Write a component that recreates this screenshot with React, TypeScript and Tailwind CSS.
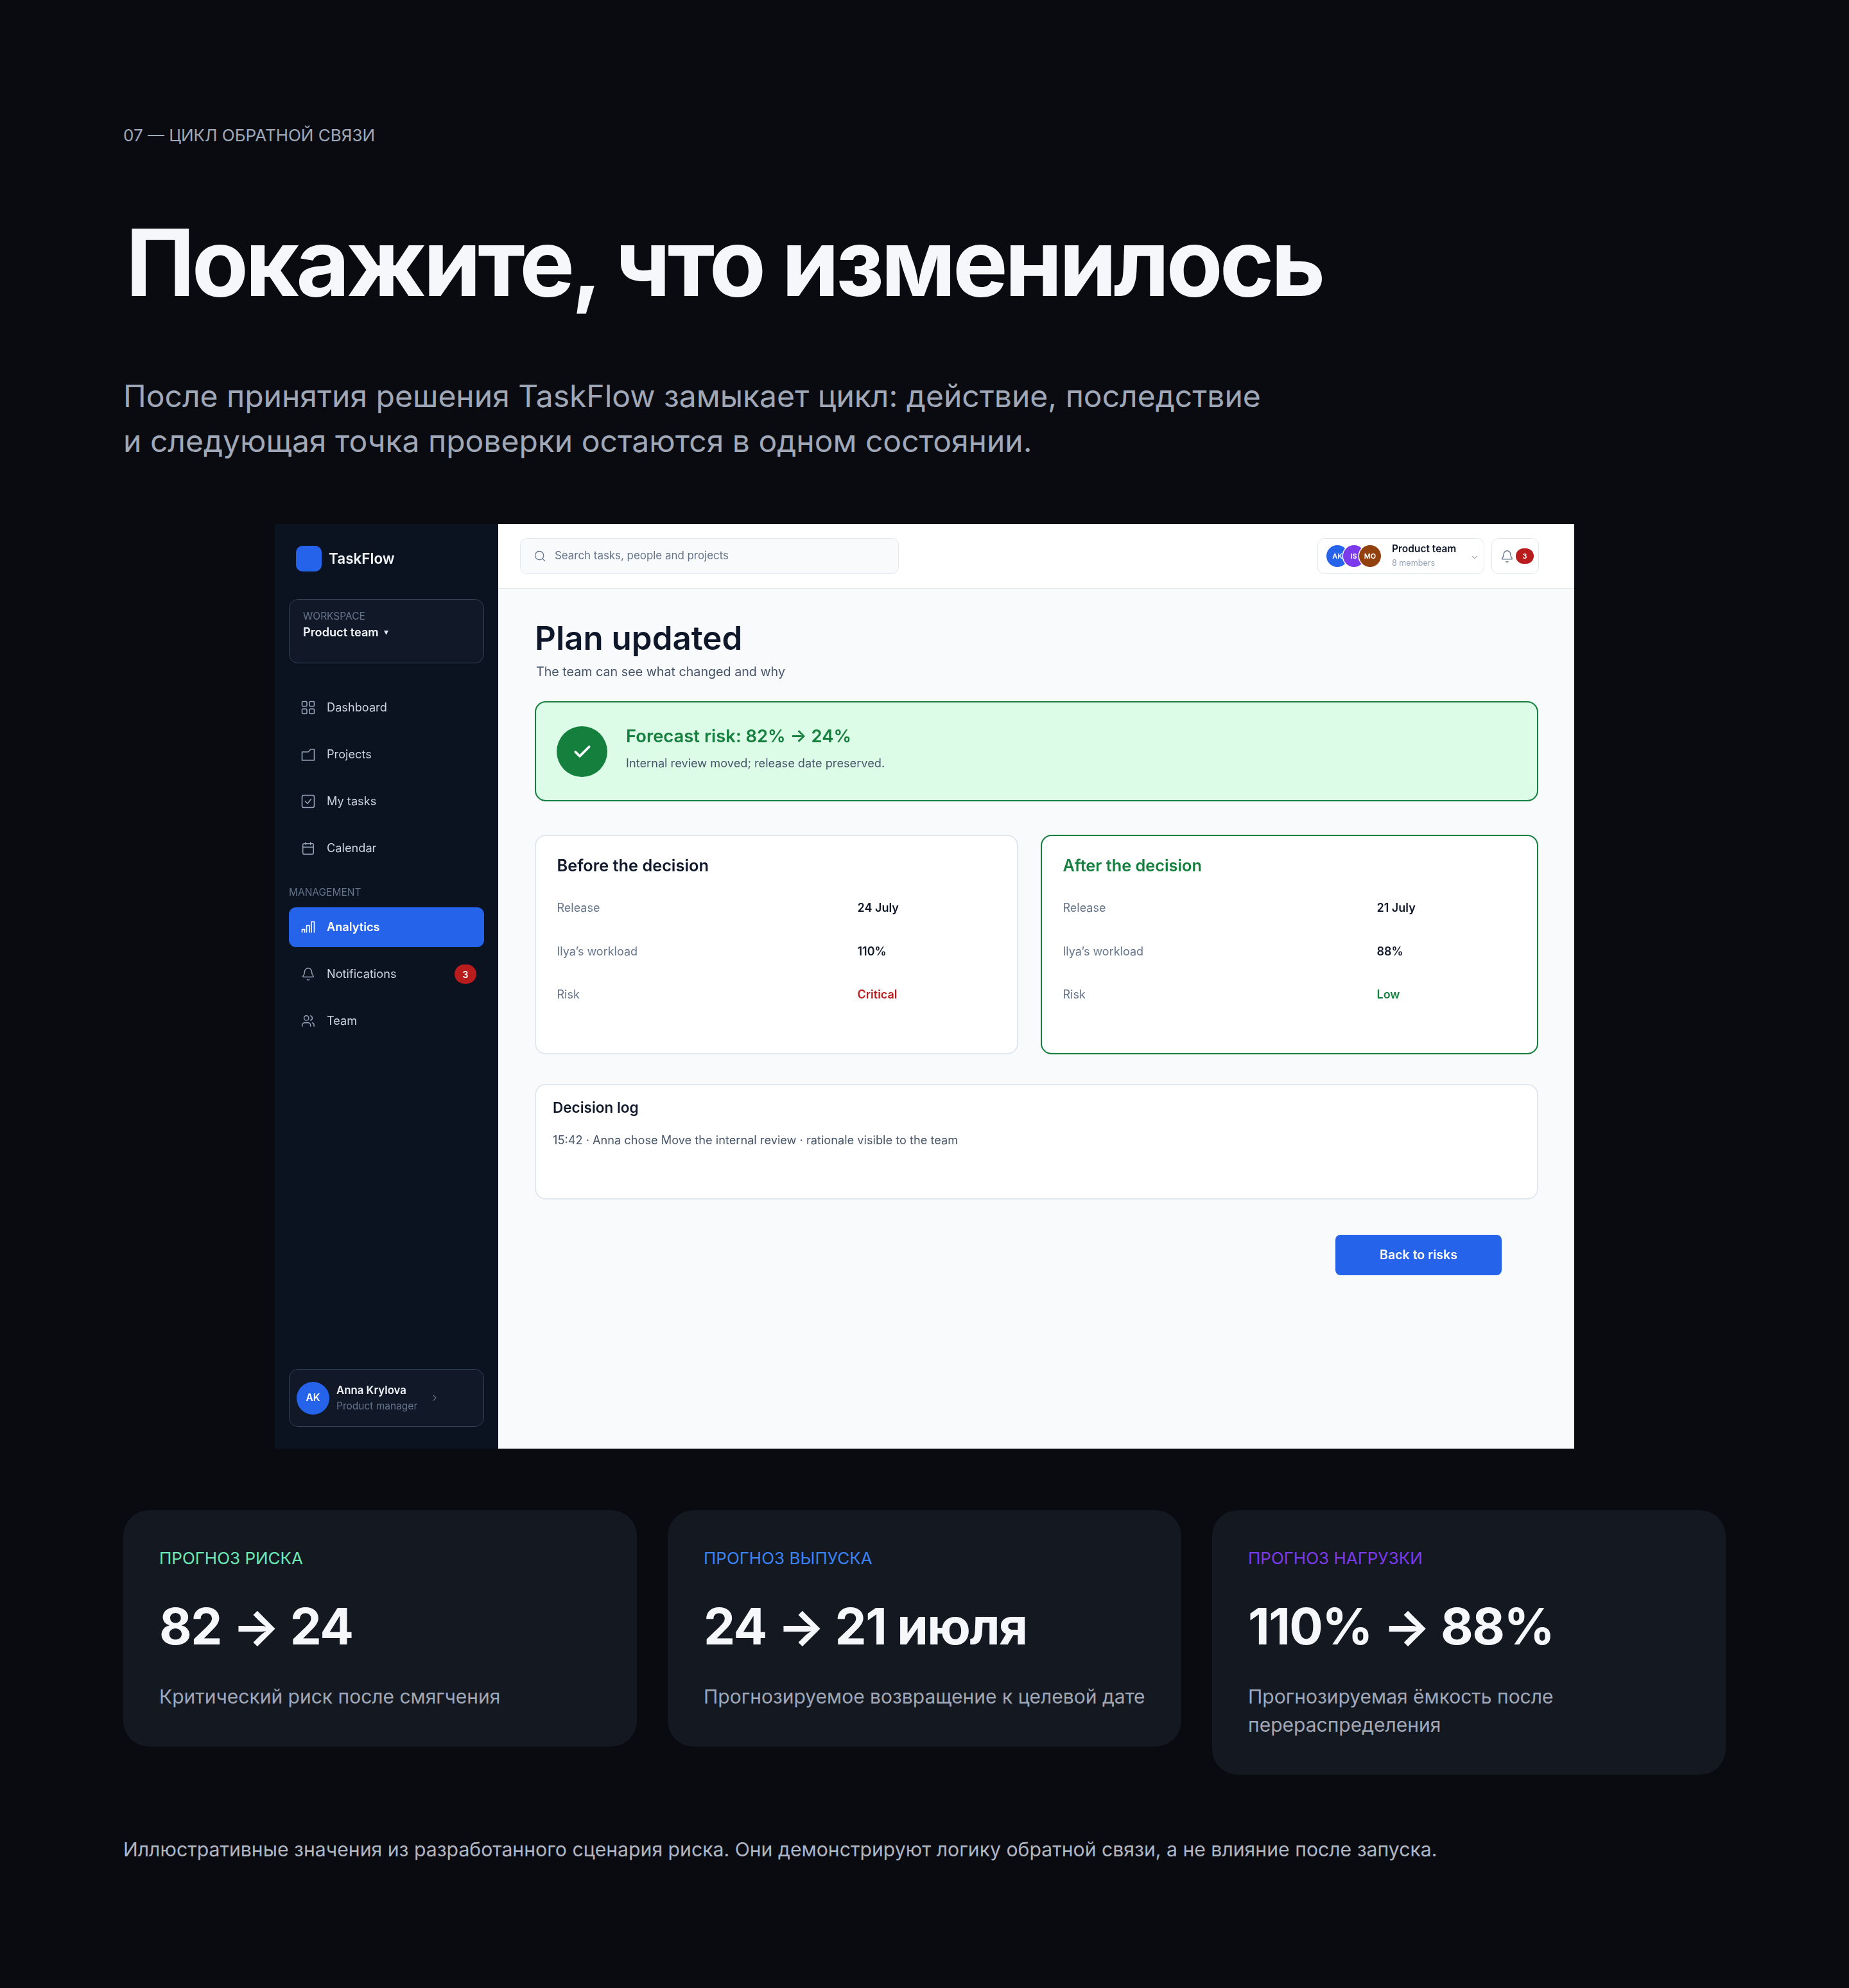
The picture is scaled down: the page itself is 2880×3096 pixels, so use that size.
import React from 'react';
import { Bell, Calendar, Check, ChevronDown, ChevronRight, Search, Users } from 'lucide-react';

const fontClass = "font-['Inter','Noto_Sans',sans-serif]";

function GridIcon(): React.ReactElement {
  return (
    <svg width="22" height="22" viewBox="0 0 22 22" fill="none" stroke="currentColor" strokeWidth="1.6">
      <rect x="1.5" y="1.5" width="7.5" height="7.5" rx="1.6" />
      <rect x="13" y="1.5" width="7.5" height="7.5" rx="1.6" />
      <rect x="1.5" y="13" width="7.5" height="7.5" rx="1.6" />
      <rect x="13" y="13" width="7.5" height="7.5" rx="1.6" />
    </svg>
  );
}

function FolderIcon(): React.ReactElement {
  return (
    <svg width="22" height="22" viewBox="0 0 22 22" fill="none" stroke="currentColor" strokeWidth="1.6" strokeLinejoin="round">
      <path d="M1.5 7 H11 L15 3 H20.5 V20 H1.5 Z" />
    </svg>
  );
}

function TaskIcon(): React.ReactElement {
  return (
    <svg width="22" height="22" viewBox="0 0 22 22" fill="none" stroke="currentColor" strokeWidth="1.6" strokeLinecap="round" strokeLinejoin="round">
      <rect x="1.5" y="1.5" width="19" height="19" rx="2.5" />
      <path d="M6.5 11 L10 14.5 L15.5 7.5" />
    </svg>
  );
}

function BarsIcon(): React.ReactElement {
  return (
    <svg width="22" height="22" viewBox="0 0 22 22" fill="none" stroke="currentColor" strokeWidth="1.6" strokeLinejoin="round">
      <path d="M1.5 19.5 V14.5 H5.5 V19.5" />
      <path d="M8.5 19.5 V8.5 H13 V19.5" />
      <path d="M16 19.5 V2.5 H20.5 V19.5" />
    </svg>
  );
}

function NavItem({
  icon,
  label,
  active,
  badge,
}: {
  icon: React.ReactNode;
  label: string;
  active?: boolean;
  badge?: string;
}): React.ReactElement {
  return (
    <div
      className={
        active
          ? 'flex h-[62px] items-center rounded-[11px] bg-[#2563eb] pl-[19px] pr-[12px] text-white'
          : 'flex h-[62px] items-center rounded-[11px] pl-[19px] pr-[12px] text-[#cbd5e1]'
      }
    >
      <span className={active ? 'flex w-[40px] text-white' : 'flex w-[40px] text-[#94a3b8]'}>{icon}</span>
      <span className={active ? 'flex-1 text-[18.2px] font-semibold' : 'flex-1 text-[18.2px]'}>{label}</span>
      {badge && (
        <span className="flex h-[30px] w-[34px] items-center justify-center rounded-full bg-[#b91c1c] text-[14px] font-semibold text-white">
          {badge}
        </span>
      )}
    </div>
  );
}

function Sidebar(): React.ReactElement {
  return (
    <aside className="flex w-[348px] shrink-0 flex-col bg-[#0b1220] px-[22px] pb-[34px] pt-[34px]">
      <div className="flex h-[40px] items-center pl-[11px]">
        <div className="h-[40px] w-[40px] rounded-[10px] bg-[#2563eb]" />
        <span className="ml-[11px] text-[22.5px] font-semibold text-[#f1f5f9]">TaskFlow</span>
      </div>
      <div className="mt-[43px] h-[100px] rounded-[14px] border border-[#334155] bg-[#111827] px-[21px] pt-[16px]">
        <div className="text-[15.5px] leading-[20px] text-[#64748b]">WORKSPACE</div>
        <div className="mt-[4px] flex items-center text-[18.2px] font-semibold leading-[20px] text-[#f1f5f9]">
          Product team
          <span className="ml-[8px] text-[14px] font-normal text-[#e2e8f0]">▾</span>
        </div>
      </div>
      <div className="mt-[38px] flex flex-col gap-[11px]">
        <NavItem icon={<GridIcon />} label="Dashboard" />
        <NavItem icon={<FolderIcon />} label="Projects" />
        <NavItem icon={<TaskIcon />} label="My tasks" />
        <NavItem icon={<Calendar size={22} strokeWidth={1.6} />} label="Calendar" />
      </div>
      <div className="mb-[13px] mt-[28px] text-[15.5px] leading-[20px] text-[#64748b]">MANAGEMENT</div>
      <div className="flex flex-col gap-[11px]">
        <NavItem icon={<BarsIcon />} label="Analytics" active />
        <NavItem icon={<Bell size={22} strokeWidth={1.6} />} label="Notifications" badge="3" />
        <NavItem icon={<Users size={22} strokeWidth={1.6} />} label="Team" />
      </div>
      <div className="mt-auto flex h-[90px] items-center rounded-[14px] border border-[#334155] bg-[#111827] pl-[11px]">
        <div className="flex h-[51px] w-[51px] shrink-0 items-center justify-center rounded-full bg-[#2563eb] text-[15.5px] font-semibold text-white">
          AK
        </div>
        <div className="ml-[11px] w-[145px]">
          <div className="text-[16.8px] font-semibold leading-[20px] text-[#f1f5f9]">Anna Krylova</div>
          <div className="mt-[5px] text-[15.5px] leading-[20px] text-[#64748b]">Product manager</div>
        </div>
        <ChevronRight size={16} strokeWidth={1.6} className="text-[#64748b]" />
      </div>
    </aside>
  );
}

function Avatar({ text, color }: { text: string; color: string }): React.ReactElement {
  return (
    <span
      className={`-ml-[8.5px] flex h-[34px] w-[34px] items-center justify-center rounded-full text-[11px] font-semibold text-white ring-[1.5px] ring-white first:ml-0 ${color}`}
    >
      {text}
    </span>
  );
}

function TopBar(): React.ReactElement {
  return (
    <header className="flex h-[101px] shrink-0 items-center border-b border-[#e2e8f0] bg-white pl-[34px] pr-[55px]">
      <div className="flex h-[56px] w-[590px] items-center rounded-[11px] border border-[#e2e8f0] bg-[#f8fafc] pl-[20px]">
        <Search size={20} strokeWidth={1.6} className="text-[#64748b]" />
        <span className="ml-[13px] text-[16.9px] text-[#64748b]">Search tasks, people and projects</span>
      </div>
      <div className="ml-auto flex gap-[11px]">
        <div className="flex h-[56px] w-[260px] items-center rounded-[11px] border border-[#e2e8f0] bg-white pl-[13px]">
          <div className="flex">
            <Avatar text="AK" color="bg-[#2563eb]" />
            <Avatar text="IS" color="bg-[#7c3aed]" />
            <Avatar text="MO" color="bg-[#92400e]" />
          </div>
          <div className="ml-[17px] w-[122px]">
            <div className="text-[15.5px] font-semibold leading-[20px] text-[#0f172a]">Product team</div>
            <div className="mt-[2px] text-[12.6px] leading-[20px] text-[#94a3b8]">8 members</div>
          </div>
          <ChevronDown size={14} strokeWidth={1.6} className="mt-[4px] text-[#64748b]" />
        </div>
        <div className="flex h-[56px] w-[74px] items-center rounded-[11px] border border-[#e2e8f0] bg-white pl-[13px]">
          <Bell size={21} strokeWidth={1.6} className="text-[#64748b]" />
          <span className="ml-[3px] flex h-[24px] w-[28px] items-center justify-center rounded-full bg-[#b91c1c] text-[11px] font-semibold text-white">
            3
          </span>
        </div>
      </div>
    </header>
  );
}

function CompareCard({
  title,
  rows,
  highlighted,
  valueWidth,
}: {
  title: string;
  rows: { label: string; value: string; color?: string }[];
  highlighted?: boolean;
  valueWidth: string;
}): React.ReactElement {
  return (
    <div
      className={
        highlighted
          ? 'h-[342px] flex-1 rounded-[17px] border-2 border-[#15803d] bg-white px-[32.5px] pt-[28.5px]'
          : 'h-[342px] w-[753px] shrink-0 rounded-[17px] border-2 border-[#e2e8f0] bg-white px-[32.5px] pt-[28.5px]'
      }
    >
      <h3
        className={
          highlighted
            ? 'text-[25.3px] font-semibold leading-[34px] text-[#15803d]'
            : 'text-[25.3px] font-semibold leading-[34px] text-[#0f172a]'
        }
      >
        {title}
      </h3>
      <div className="mt-[36px] flex flex-col gap-[41.5px]">
        {rows.map((row) => (
          <div key={row.label} className="flex h-[26px] items-center text-[18px]">
            <span className={`${valueWidth} text-[#64748b]`}>{row.label}</span>
            <span className={`font-semibold ${row.color ?? 'text-[#0f172a]'}`}>{row.value}</span>
          </div>
        ))}
      </div>
    </div>
  );
}

function Mockup(): React.ReactElement {
  return (
    <div className="mx-auto mt-[94px] flex h-[1440px] w-[2024px] overflow-hidden blur-[0.5px]">
      <Sidebar />
      <div className="flex flex-1 flex-col bg-[#f8fafc]">
        <TopBar />
        <main className="pl-[57px] pr-[56px] pt-[46px]">
          <h2 className="text-[51px] font-semibold leading-[62px] text-[#0f172a]">Plan updated</h2>
          <p className="ml-[2px] mt-[8px] text-[19.7px] leading-[26px] text-[#475569]">The team can see what changed and why</p>
          <div className="mt-[33px] flex h-[156px] rounded-[17px] border-2 border-[#15803d] bg-[#dcfce7] pl-[32px]">
            <div className="mt-[37px] flex h-[79px] w-[79px] items-center justify-center rounded-full bg-[#15803d]">
              <Check size={32} strokeWidth={2.8} className="text-white" />
            </div>
            <div className="ml-[29px] mt-[34px]">
              <div className="text-[27.4px] font-semibold leading-[36px] text-[#15803d]">Forecast risk: 82% → 24%</div>
              <div className="mt-[12px] text-[18.2px] leading-[24px] text-[#475569]">Internal review moved; release date preserved.</div>
            </div>
          </div>
          <div className="mt-[52px] flex gap-[35px]">
            <CompareCard
              title="Before the decision"
              valueWidth="w-[468px]"
              rows={[
                { label: 'Release', value: '24 July' },
                { label: 'Ilya’s workload', value: '110%' },
                { label: 'Risk', value: 'Critical', color: 'text-[#b91c1c]' },
              ]}
            />
            <CompareCard
              title="After the decision"
              highlighted
              valueWidth="w-[489px]"
              rows={[
                { label: 'Release', value: '21 July' },
                { label: 'Ilya’s workload', value: '88%' },
                { label: 'Risk', value: 'Low', color: 'text-[#15803d]' },
              ]}
            />
          </div>
          <div className="mt-[46px] h-[180px] rounded-[17px] border-2 border-[#e2e8f0] bg-white pl-[26px] pt-[20px]">
            <div className="text-[22.5px] font-semibold leading-[30px] text-[#0f172a]">Decision log</div>
            <div className="mt-[23px] text-[18.2px] leading-[24px] text-[#475569]">
              15:42 · Anna chose Move the internal review · rationale visible to the team
            </div>
          </div>
          <div className="mt-[55px] flex justify-end pr-[57px]">
            <div className="flex h-[63px] w-[259px] items-center justify-center rounded-[8px] bg-[#2563eb] text-[19.6px] font-semibold text-white">
              Back to risks
            </div>
          </div>
        </main>
      </div>
    </div>
  );
}

function StatCard({
  label,
  labelColor,
  value,
  text,
}: {
  label: string;
  labelColor: string;
  value: string;
  text: React.ReactNode;
}): React.ReactElement {
  return (
    <div className="w-[800px] rounded-[40px] bg-[#141820] p-[56px]">
      <div className={`text-[26px] leading-[38px] ${labelColor}`}>{label}</div>
      <div className="mt-[42px] text-[78px] font-bold leading-[90px] tracking-[-1.5px] text-[#f5f7fb]">{value}</div>
      <div className="mt-[42px] text-[30px] leading-[44px] text-[#a0a8b8]">{text}</div>
    </div>
  );
}

export default function App(): React.ReactElement {
  return (
    <div className={`h-[3096px] w-[2880px] bg-[#090b10] px-[192px] pt-[191px] ${fontClass}`}>
      <div className="text-[26px] leading-[40px] text-[#a0a8b8]">07 — ЦИКЛ ОБРАТНОЙ СВЯЗИ</div>
      <h1 className="ml-[4px] mt-[98px] text-[144px] font-bold leading-[160px] tracking-[-4.9px] text-[#f5f7fb]">
        Покажите, что изменилось
      </h1>
      <p className="mt-[93px] text-[48px] leading-[70px] text-[#a0a8b8]">
        После принятия решения TaskFlow замыкает цикл: действие, последствие
        <br />и следующая точка проверки остаются в одном состоянии.
      </p>
      <Mockup />
      <div className="mt-[96px] flex items-start gap-[48px]">
        <StatCard label="ПРОГНОЗ РИСКА" labelColor="text-[#6ee7b7]" value="82 → 24" text="Критический риск после смягчения" />
        <StatCard label="ПРОГНОЗ ВЫПУСКА" labelColor="text-[#3b82f6]" value="24 → 21 июля" text="Прогнозируемое возвращение к целевой дате" />
        <StatCard
          label="ПРОГНОЗ НАГРУЗКИ"
          labelColor="text-[#7c3aed]"
          value="110% → 88%"
          text={
            <>
              Прогнозируемая ёмкость после
              <br />
              перераспределения
            </>
          }
        />
      </div>
      <p className="mt-[94px] text-[30.2px] leading-[44px] text-[#b0b6c2]">
        Иллюстративные значения из разработанного сценария риска. Они демонстрируют логику обратной связи, а не влияние после запуска.
      </p>
    </div>
  );
}
